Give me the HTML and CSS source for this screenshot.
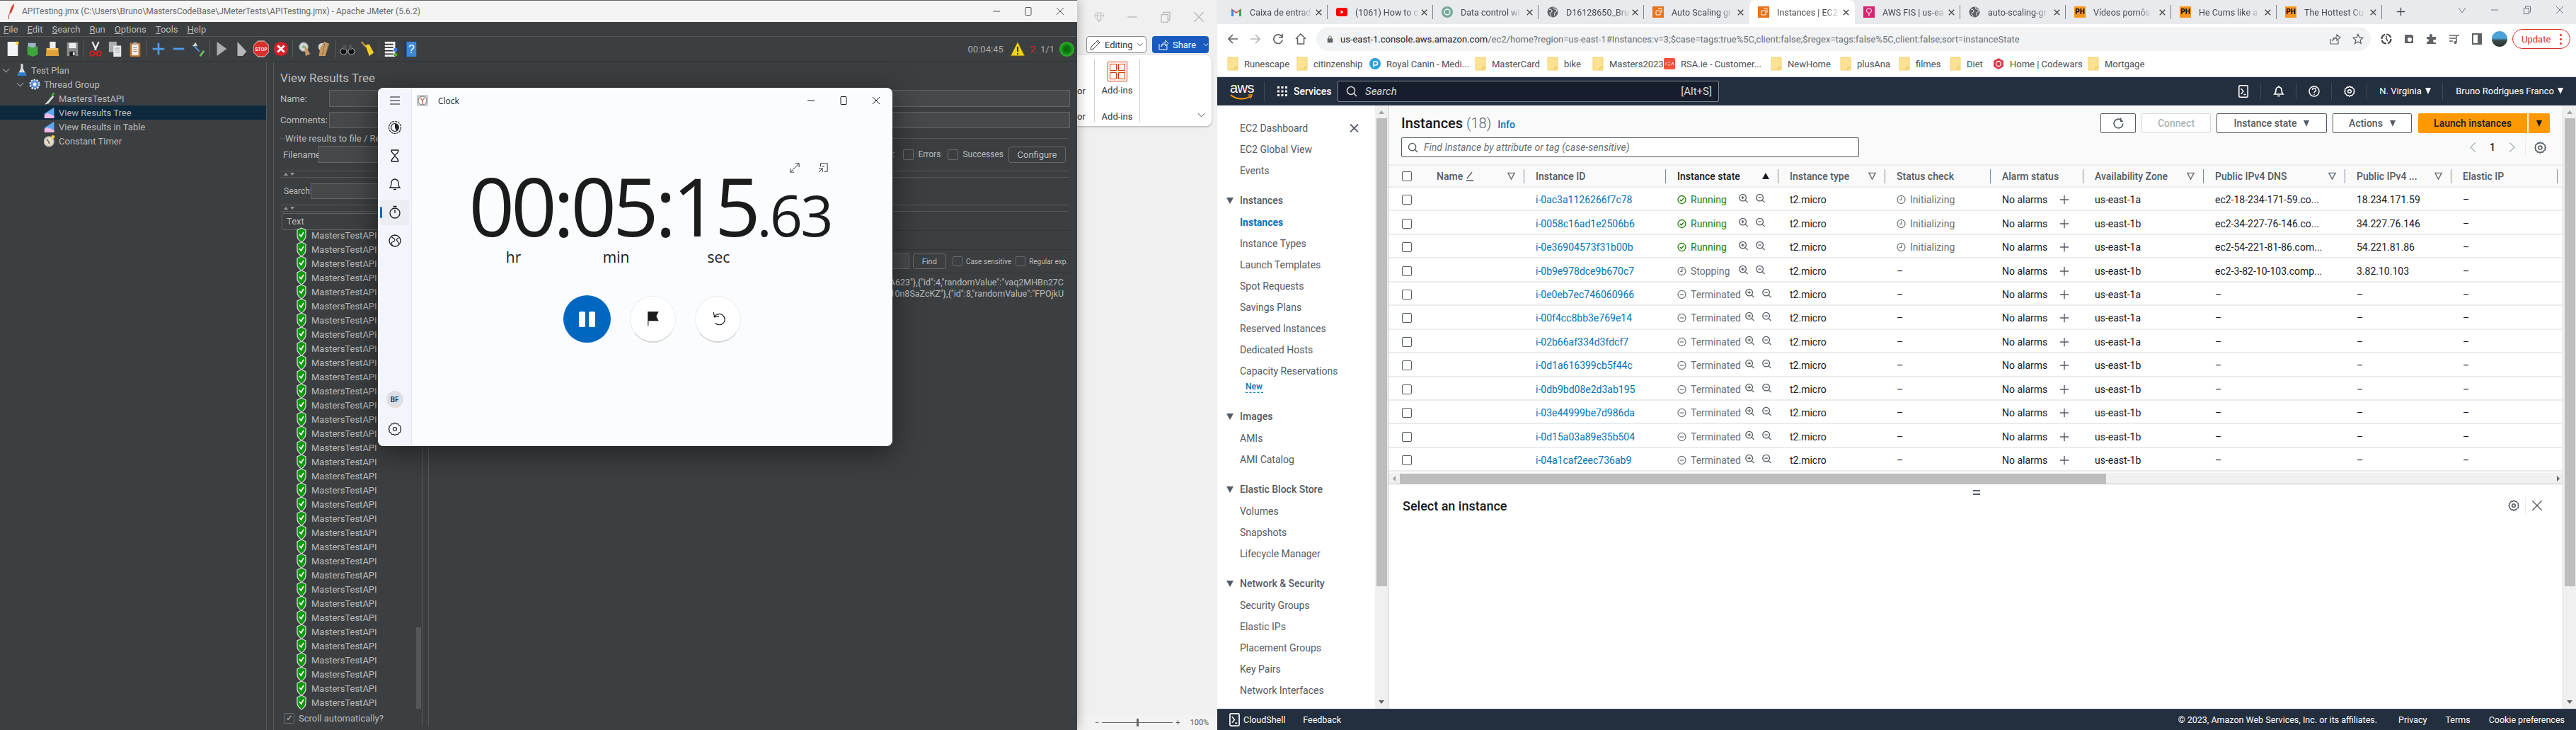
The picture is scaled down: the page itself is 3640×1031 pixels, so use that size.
FILE: index.html
```html
<!DOCTYPE html>
<html lang="en">
<head>
    <meta charset="UTF-8">
    <title>Desktop</title>
    <link rel="stylesheet" href="styles.css">
</head>
<body>
<svg class="defs">
    <symbol id="i-x" viewBox="0 0 12 12"><path d="M1 1l10 10M11 1L1 11" fill="none" stroke="currentColor" stroke-width="1"/></symbol>
    <symbol id="i-x2" viewBox="0 0 12 12"><path d="M1 1l10 10M11 1L1 11" fill="none" stroke="currentColor" stroke-width="1.800"/></symbol>
    <symbol id="i-min" viewBox="0 0 12 12"><path d="M1 6h10" stroke="currentColor" stroke-width="1"/></symbol>
    <symbol id="i-max" viewBox="0 0 12 12"><rect x="2" y=".5" width="8" height="11" rx="1" fill="none" stroke="currentColor"/></symbol>
    <symbol id="i-restore" viewBox="0 0 12 12"><path d="M1.500 3.500h7v8h-7zM3.500 3V1h7v8H9" fill="none" stroke="currentColor"/></symbol>
    <symbol id="i-folder" viewBox="0 0 16 20"><path d="M1 1h14v18H1z" fill="#fde293" stroke="#f2d06b"/><path d="M11 19v-4h4" fill="none" stroke="#e8bd4a"/></symbol>
    <symbol id="i-shield" viewBox="0 0 14 22"><path d="M7 1l6 3v8c0 4-3 7-6 9-3-2-6-5-6-9V4z" fill="#0a9a0a" stroke="#d5d5d5" stroke-width="1.300"/><path d="M4 10l2.500 3L10 7" fill="none" stroke="#fff" stroke-width="1.600"/></symbol>
    <symbol id="i-check" viewBox="0 0 16 16"><circle cx="8" cy="8" r="6.800" fill="none" stroke="currentColor" stroke-width="1.600"/><path d="M4.800 8l2.300 2.500L11.300 5.500" fill="none" stroke="currentColor" stroke-width="1.600"/></symbol>
    <symbol id="i-pending" viewBox="0 0 16 16"><circle cx="8" cy="8" r="6.800" fill="none" stroke="currentColor" stroke-width="1.500"/><path d="M8.500 3.500V8.500H5" fill="none" stroke="currentColor" stroke-width="1.500"/></symbol>
    <symbol id="i-stopped" viewBox="0 0 16 16"><circle cx="8" cy="8" r="6.800" fill="none" stroke="currentColor" stroke-width="1.500"/><path d="M4.500 8h7" stroke="currentColor" stroke-width="1.500"/></symbol>
    <symbol id="i-zin" viewBox="0 0 16 16"><circle cx="7" cy="7" r="5.500" fill="none" stroke="currentColor" stroke-width="1.500"/><path d="M4.500 7h5M7 4.500v5M11 11l4 4" fill="none" stroke="currentColor" stroke-width="1.500"/></symbol>
    <symbol id="i-zout" viewBox="0 0 16 16"><circle cx="7" cy="7" r="5.500" fill="none" stroke="currentColor" stroke-width="1.500"/><path d="M4.500 7h5M11 11l4 4" fill="none" stroke="currentColor" stroke-width="1.500"/></symbol>
    <symbol id="i-plus" viewBox="0 0 16 16"><path d="M8 1v14M1 8h14" stroke="currentColor" stroke-width="1.600"/></symbol>
    <symbol id="i-gear" viewBox="0 0 16 16"><path d="M8 1l1.600 1.200 2-.2 1 1.800 1.800 1-.2 2L15 8l-.8 1.200.2 2-1.800 1-1 1.800-2-.2L8 15l-1.600-1.200-2 .2-1-1.800-1.800-1 .2-2L1 8l.8-1.200-.2-2 1.800-1 1-1.800 2 .2z" fill="none" stroke="currentColor" stroke-width="1.500"/><circle cx="8" cy="8" r="2.300" fill="none" stroke="currentColor" stroke-width="1.500"/></symbol>
    <symbol id="i-filter" viewBox="0 0 12 12"><path d="M1 1.500h10L6 11z" fill="none" stroke="currentColor" stroke-width="1.600"/></symbol>
    <symbol id="i-shell" viewBox="0 0 14 18"><rect x=".8" y=".8" width="12.400" height="16.400" rx="1.500" fill="none" stroke="currentColor" stroke-width="1.600"/><path d="M3.500 5l3.500 4-3.500 4M7.500 13.500h3" fill="none" stroke="currentColor" stroke-width="1.400"/></symbol>
</svg>

<div class="desktop">

    <!-- JMeter -->
    <section class="jmeter">
        <header class="jm-title">
            <svg class="jm-feather" viewBox="0 0 10 24"><path d="M9 1C5 4 3 10 2 16l3-2C7 10 9 5 9 1z" fill="#d8402a"/><path d="M2 16l-1 7" stroke="#b5232b"/></svg>
            <span class="jm-title-text">APITesting.jmx (C:\Users\Bruno\MastersCodeBase\JMeterTests\APITesting.jmx) - Apache JMeter (5.6.2)</span>
            <div class="win-btns jm-btns">
                <svg><use href="#i-min"/></svg>
                <svg><use href="#i-max"/></svg>
                <svg><use href="#i-x"/></svg>
            </div>
        </header>
        <nav class="jm-menu">
            <span><u>F</u>ile</span><span><u>E</u>dit</span><span><u>S</u>earch</span><span><u>R</u>un</span><span><u>O</u>ptions</span><span><u>T</u>ools</span><span><u>H</u>elp</span>
        </nav>
        <div class="jm-tools">
            <svg class="tool" viewBox="0 0 24 24"><path d="M4 1h14l2 2v20H4z" fill="#f4f4f4"/><circle cx="19" cy="3" r="2.500" fill="#f5d33c"/></svg>
            <svg class="tool" viewBox="0 0 24 24"><path d="M5 3h12v8H5z" fill="#9fb6c8"/><path d="M4 8l8 2 8-2v13l-8 3-8-3z" fill="#3da63d"/></svg>
            <svg class="tool" viewBox="0 0 24 24"><path d="M8 1h9v10H8z" fill="#eee"/><path d="M3 11h18l1 12H2z" fill="#e0a23a"/><path d="M3 11h18v3H3z" fill="#f2c568"/></svg>
            <svg class="tool" viewBox="0 0 24 24"><path d="M4 2h17v21H4z" fill="#8a8d90"/><path d="M7 3h11v8H7z" fill="#eee"/><path d="M8 16h9v7H8z" fill="#222"/><path d="M13 17h3v5h-3z" fill="#ddd"/></svg>
            <i class="tool-sep"></i>
            <svg class="tool" viewBox="0 0 24 24"><path d="M7 1l6 13M17 1l-6 13" stroke="#e6e6e6" stroke-width="2.500"/><circle cx="7" cy="19" r="3.500" fill="none" stroke="#d42020" stroke-width="2.200"/><circle cx="17" cy="19" r="3.500" fill="none" stroke="#d42020" stroke-width="2.200"/></svg>
            <svg class="tool" viewBox="0 0 24 24"><path d="M2 1h12v16H2z" fill="#a9adb0"/><path d="M9 7h12v17H9z" fill="#e8e8e8"/><path d="M11 11h8M11 14h8M11 17h8" stroke="#999"/></svg>
            <svg class="tool" viewBox="0 0 24 24"><path d="M4 3h16v21H4z" fill="#c07a2c"/><path d="M7 5h10v17H7z" fill="#f0f0f0"/><path d="M9 2h6v4H9z" fill="#aaa"/><path d="M9 10h6M9 13h6M9 16h6" stroke="#777"/></svg>
            <i class="tool-sep"></i>
            <svg class="tool" viewBox="0 0 24 24"><path d="M12 3v18M3 12h18" stroke="#4e9be8" stroke-width="3"/></svg>
            <svg class="tool" viewBox="0 0 24 24"><path d="M4 12h17" stroke="#4e9be8" stroke-width="3"/></svg>
            <svg class="tool" viewBox="0 0 24 24"><path d="M3 8l5-6 3 6z" fill="#cfd4d8"/><path d="M6 8l8 8" stroke="#4e9be8" stroke-width="2"/><path d="M15 23l6-8" stroke="#6fbf60" stroke-width="3"/></svg>
            <i class="tool-sep"></i>
            <svg class="tool" viewBox="0 0 24 24"><path d="M5 1l15 11L5 23z" fill="#a9adb0"/></svg>
            <svg class="tool" viewBox="0 0 24 24"><path d="M6 1l14 15-6 7H6z" fill="#b5b9bc"/></svg>
            <svg class="tool" viewBox="0 0 24 24"><path d="M7 0h10l7 7v10l-7 7H7l-7-7V7z" fill="#d7302a" stroke="#eee"/><text x="12" y="15" class="stop-text">STOP</text></svg>
            <svg class="tool" viewBox="0 0 24 24"><circle cx="12" cy="12" r="11" fill="#d7202a"/><path d="M7 7l10 10M17 7L7 17" stroke="#fff" stroke-width="3.200"/></svg>
            <i class="tool-sep"></i>
            <svg class="tool" viewBox="0 0 24 24"><circle cx="11" cy="9" r="7" fill="#cfd4d8" stroke="#8a8d90"/><path d="M12 8l2 15 7-3-7-12z" fill="#c79a62"/><circle cx="11" cy="9" r="2" fill="#6fbf60"/></svg>
            <svg class="tool" viewBox="0 0 24 24"><circle cx="9" cy="9" r="6" fill="#cfd4d8"/><path d="M6 10l6-9 8 3-6 19H4z" fill="#c79a62"/><path d="M9 22l4-18M14 22l5-18" stroke="#8a6a3e"/></svg>
            <i class="tool-sep"></i>
            <svg class="tool" viewBox="0 0 24 24"><circle cx="6" cy="16" r="5" fill="#111" stroke="#ccc"/><circle cx="18" cy="16" r="5" fill="#111" stroke="#ccc"/><path d="M5 6h5v8H5zM14 6h5v8h-5z" fill="#555"/></svg>
            <svg class="tool" viewBox="0 0 24 24"><path d="M3 1l7 8" stroke="#c9973c" stroke-width="2.500"/><path d="M9 6l6-1 7 13-7 5z" fill="#f2cf2b"/></svg>
            <i class="tool-sep"></i>
            <svg class="tool" viewBox="0 0 24 24"><path d="M3 1h16v23H3z" fill="#f0f0f0"/><path d="M2 5h14M2 10h14M2 15h14M2 20h14" stroke="#222" stroke-width="1.600"/><path d="M17 11h5v5h-5z" fill="#3b7fd6"/><path d="M17 19h5v4h-5z" fill="#4aa84a"/></svg>
            <svg class="tool" viewBox="0 0 24 24"><path d="M2 1h4v23H2z" fill="#1f3a66"/><path d="M6 1h15v23H6z" fill="#3b87d8"/><text x="13.500" y="19" class="help-text">?</text></svg>
            <div class="jm-status">
                <span>00:04:45</span>
                <svg class="jm-warn" viewBox="0 0 22 22"><path d="M11 1l10 20H1z" fill="#f2d31b" stroke="#6b5a10"/><path d="M11 8v7M11 17v2" stroke="#222" stroke-width="2"/></svg>
                <span class="jm-red">2</span>
                <span>1/1</span>
                <i class="jm-ball"></i>
            </div>
        </div>

        <div class="jm-body">
            <aside class="jm-tree">
                <div class="tree-row lvl0"><b class="chev"></b><svg class="tree-ico" viewBox="0 0 20 24"><path d="M8 1h4v8l6 13H2L8 9z" fill="#d9dde0"/><path d="M5 16h10l3 6H2z" fill="#2c7fd1"/></svg>Test Plan</div>
                <div class="tree-row lvl1"><b class="chev"></b><svg class="tree-ico" viewBox="0 0 20 20"><circle cx="10" cy="10" r="8" fill="#5a8ed0" stroke="#d9dde0" stroke-width="3" stroke-dasharray="3 2"/><circle cx="10" cy="10" r="3" fill="#fff"/></svg>Thread Group</div>
                <div class="tree-row lvl2"><svg class="tree-ico" viewBox="0 0 20 24"><path d="M1 23l4-4 10-12 3 2L8 21z" fill="#d9dde0"/><path d="M13 6l4-5 2 3-3 5z" fill="#4aa84a"/></svg>MastersTestAPI</div>
                <div class="tree-row lvl2 selected"><svg class="tree-ico" viewBox="0 0 20 22"><path d="M1 21V13l12-8 5-3v19z" fill="#5ca8ee"/><path d="M1 21v-6l5-3 12 5v4z" fill="#f4b8e8"/></svg>View Results Tree</div>
                <div class="tree-row lvl2"><svg class="tree-ico" viewBox="0 0 20 22"><path d="M1 21V13l12-8 5-3v19z" fill="#5ca8ee"/><path d="M1 21v-6l5-3 12 5v4z" fill="#f4b8e8"/></svg>View Results in Table</div>
                <div class="tree-row lvl2"><svg class="tree-ico" viewBox="0 0 20 22"><circle cx="9" cy="12" r="8.500" fill="#e6dcc2" stroke="#b9bcbf" stroke-width="2"/><path d="M9 13L5 8M9 13v3" stroke="#444" stroke-width="1.500"/><circle cx="16" cy="4" r="3" fill="#f5d33c"/></svg>Constant Timer</div>
            </aside>
            <div class="jm-main">
                <h2 class="jm-heading">View Results Tree</h2>
                <div class="jm-field"><label>Name:</label><div class="jm-input"></div></div>
                <div class="jm-field jm-field-gap"><label>Comments:</label><div class="jm-input"></div></div>
                <div class="jm-legend"><span>Write results to file / Read from file</span></div>
                <div class="jm-file">
                    <label>Filename</label><div class="jm-input"></div>
                    <span class="jm-only">Log/Display Only:</span>
                    <i class="jm-box jm-box-errors"></i><span>Errors</span>
                    <i class="jm-box jm-box-success"></i><span>Successes</span>
                    <div class="jm-button jm-configure">Configure</div>
                </div>
                <div class="jm-split"><i></i><i></i></div>
                <div class="jm-search"><label>Search:</label><div class="jm-input"></div></div>
                <div class="jm-split"><i></i><i></i></div>
                <div class="jm-results">
                    <div class="jm-list">
                        <div class="jm-text-head">Text</div>
                        <ul class="jm-samples">
                            <li><svg><use href="#i-shield"/></svg>MastersTestAPI</li><li><svg><use href="#i-shield"/></svg>MastersTestAPI</li><li><svg><use href="#i-shield"/></svg>MastersTestAPI</li><li><svg><use href="#i-shield"/></svg>MastersTestAPI</li><li><svg><use href="#i-shield"/></svg>MastersTestAPI</li><li><svg><use href="#i-shield"/></svg>MastersTestAPI</li><li><svg><use href="#i-shield"/></svg>MastersTestAPI</li><li><svg><use href="#i-shield"/></svg>MastersTestAPI</li><li><svg><use href="#i-shield"/></svg>MastersTestAPI</li><li><svg><use href="#i-shield"/></svg>MastersTestAPI</li><li><svg><use href="#i-shield"/></svg>MastersTestAPI</li><li><svg><use href="#i-shield"/></svg>MastersTestAPI</li><li><svg><use href="#i-shield"/></svg>MastersTestAPI</li><li><svg><use href="#i-shield"/></svg>MastersTestAPI</li><li><svg><use href="#i-shield"/></svg>MastersTestAPI</li><li><svg><use href="#i-shield"/></svg>MastersTestAPI</li><li><svg><use href="#i-shield"/></svg>MastersTestAPI</li><li><svg><use href="#i-shield"/></svg>MastersTestAPI</li><li><svg><use href="#i-shield"/></svg>MastersTestAPI</li><li><svg><use href="#i-shield"/></svg>MastersTestAPI</li><li><svg><use href="#i-shield"/></svg>MastersTestAPI</li><li><svg><use href="#i-shield"/></svg>MastersTestAPI</li><li><svg><use href="#i-shield"/></svg>MastersTestAPI</li><li><svg><use href="#i-shield"/></svg>MastersTestAPI</li><li><svg><use href="#i-shield"/></svg>MastersTestAPI</li><li><svg><use href="#i-shield"/></svg>MastersTestAPI</li><li><svg><use href="#i-shield"/></svg>MastersTestAPI</li><li><svg><use href="#i-shield"/></svg>MastersTestAPI</li><li><svg><use href="#i-shield"/></svg>MastersTestAPI</li><li><svg><use href="#i-shield"/></svg>MastersTestAPI</li><li><svg><use href="#i-shield"/></svg>MastersTestAPI</li><li><svg><use href="#i-shield"/></svg>MastersTestAPI</li><li><svg><use href="#i-shield"/></svg>MastersTestAPI</li><li><svg><use href="#i-shield"/></svg>MastersTestAPI</li>
                        </ul>
                        <div class="jm-scroll-thumb"></div>
                        <div class="jm-auto"><i class="jm-box">&#10003;</i>Scroll automatically?</div>
                    </div>
                    <div class="jm-response">
                        <div class="jm-tabs"></div>
                        <div class="jm-find">
                            <div class="jm-input"></div>
                            <div class="jm-button">Find</div>
                            <i class="jm-box"></i><span>Case sensitive</span>
                            <i class="jm-box"></i><span>Regular exp.</span>
                        </div>
                        <div class="jm-body-text">
                            <p>A623"},{"id":4,"randomValue":"vaq2MHBn27C</p>
                            <p>10n8SaZcKZ"},{"id":8,"randomValue":"FPOjkU</p>
                        </div>
                    </div>
                </div>
            </div>
        </div>
    </section>

    <!-- Clock -->
    <section class="clock">
        <aside class="clock-nav">
            <svg viewBox="0 0 20 20" class="clock-ico"><path d="M3 5h14M3 10h14M3 15h14" stroke="currentColor" stroke-width="1.200"/></svg>
            <svg viewBox="0 0 20 20" class="clock-ico cn-first"><circle cx="10" cy="10" r="8.500" fill="none" stroke="currentColor" stroke-width="1.200" stroke-dasharray="3 1"/><circle cx="10" cy="10" r="5.500" fill="none" stroke="currentColor" stroke-width="1.200"/><path d="M10 5a5 5 0 0 1 2 9.500L10 10z" fill="currentColor"/></svg>
            <svg viewBox="0 0 20 20" class="clock-ico"><path d="M5 2h10M5 18h10M5 2c0 5 5 6 5 8s-5 3-5 8M15 2c0 5-5 6-5 8s5 3 5 8" fill="none" stroke="currentColor" stroke-width="1.300"/></svg>
            <svg viewBox="0 0 20 20" class="clock-ico"><path d="M3 15h14c-2-2-2-4-2-7a5 5 0 0 0-10 0c0 3 0 5-2 7zM8 17.500h4" fill="none" stroke="currentColor" stroke-width="1.300"/></svg>
            <div class="clock-nav-on"><svg viewBox="0 0 20 20" class="clock-ico"><circle cx="10" cy="11" r="7" fill="none" stroke="currentColor" stroke-width="1.300"/><path d="M7.500 1.500h5M10 6v5" fill="none" stroke="currentColor" stroke-width="1.300"/></svg></div>
            <svg viewBox="0 0 20 20" class="clock-ico"><circle cx="10" cy="10" r="8" fill="none" stroke="currentColor" stroke-width="1.300"/><path d="M5 4c2 3 5 2 5 5s-4 2-5 4 2 3 2 4M16 6c-3 0-4 2-3 4s3 2 2 5" fill="none" stroke="currentColor" stroke-width="1.200"/></svg>
            <div class="clock-avatar">BF</div>
            <svg viewBox="0 0 16 16" class="clock-ico clock-gear"><path d="M8 1l1.600 1.200 2-.2 1 1.800 1.800 1-.2 2L15 8l-.8 1.200.2 2-1.800 1-1 1.800-2-.2L8 15l-1.600-1.200-2 .2-1-1.800-1.800-1 .2-2L1 8l.8-1.200-.2-2 1.800-1 1-1.800 2 .2z" fill="none" stroke="currentColor" stroke-width=".9"/><circle cx="8" cy="8" r="2" fill="none" stroke="currentColor" stroke-width=".9"/></svg>
        </aside>
        <div class="clock-main">
            <header class="clock-title">
                <svg class="clock-logo" viewBox="0 0 16 16"><rect width="16" height="16" rx="2" fill="#c9cdd2"/><circle cx="8" cy="8" r="6" fill="#fff" stroke="#777"/><path d="M8 8L5 4M8 8l3-4M8 8v5" stroke="#c94a3a" stroke-width="1.200"/></svg>
                <span>Clock</span>
                <div class="win-btns clock-btns">
                    <svg><use href="#i-min"/></svg>
                    <svg><use href="#i-max"/></svg>
                    <svg><use href="#i-x"/></svg>
                </div>
            </header>
            <div class="clock-expand">
                <svg viewBox="0 0 16 16"><path d="M1 15L15 1M9 1h6v6M1 9v6h6" fill="none" stroke="currentColor"/></svg>
                <svg viewBox="0 0 16 16"><path d="M4 1h11v13h-5M4 1v5M1 9h6v6M1 15l6-6M10 6H7" fill="none" stroke="currentColor"/></svg>
            </div>
            <div class="clock-time">00:05:15<small>.63</small></div>
            <div class="clock-units"><span>hr</span><span>min</span><span>sec</span></div>
            <div class="clock-actions">
                <div class="clock-pause"><i></i><i></i></div>
                <div class="clock-round"><svg viewBox="0 0 20 20"><path d="M3 1h14l-3 6 3 6H4v6H3z" fill="#1b1b1b"/></svg></div>
                <div class="clock-round"><svg viewBox="0 0 20 20"><path d="M5 8a7 7 0 1 1 1 7.500M4 2l1 6 6-1" fill="none" stroke="#1b1b1b" stroke-width="1.100"/></svg></div>
            </div>
        </div>
    </section>

    <!-- Word, mostly behind the others -->
    <section class="word">
        <div class="word-top">
            <svg viewBox="0 0 16 16"><path d="M4 2h8l3 4-7 9-7-9zM1 6h14M6 2L5 6l3 9 3-9-1-4" fill="none" stroke="currentColor" stroke-width=".800"/></svg>
            <svg><use href="#i-min"/></svg>
            <svg><use href="#i-restore"/></svg>
            <svg><use href="#i-x"/></svg>
        </div>
        <div class="word-actions">
            <div class="word-edit">
                <svg viewBox="0 0 16 16"><path d="M1 15l1-4 9-9 3 3-9 9zM9.500 3.500l3 3" fill="none" stroke="#333" stroke-width=".900"/></svg>
                Editing<svg class="word-chev" viewBox="0 0 10 6"><path d="M1 1l4 4 4-4" fill="none" stroke="currentColor" stroke-width="1.200"/></svg>
            </div>
            <div class="word-share">
                <svg viewBox="0 0 16 16"><path d="M2 7v8h11V9M5 11c0-4 3-6 6-6V2l4 4-4 4V7c-3 0-5 1-6 4z" fill="none" stroke="#fff"/></svg>
                Share<svg class="word-chev" viewBox="0 0 10 6"><path d="M1 1l4 4 4-4" fill="none" stroke="currentColor" stroke-width="1.200"/></svg>
            </div>
        </div>
        <div class="word-ribbon">
            <div class="rib-editor">
                <span>or</span><span>or</span>
            </div>
            <div class="rib-addins">
                <svg viewBox="0 0 28 28"><path d="M.5.500h27v27H.5z" fill="none" stroke="#d13c10"/><path d="M3.500 3.500h9v9h-9zM15.500 3.500h9v9h-9zM3.500 15.500h9v9h-9zM15.500 15.500h9v9h-9z" fill="none" stroke="#d13c10"/></svg>
                <span>Add-ins</span>
                <span class="rib-group">Add-ins</span>
            </div>
            <svg class="rib-more" viewBox="0 0 12 8"><path d="M1 1l5 5 5-5" fill="none" stroke="#333"/></svg>
        </div>
        <div class="word-status">
            <span class="ws-sign">&minus;</span><div class="ws-slider"><i></i></div><span class="ws-sign">+</span>
            <span class="ws-zoom">100%</span>
        </div>
    </section>

    <!-- Chrome with the EC2 console -->
    <section class="chrome">
        <div class="tabs">
            <div class="tab"><svg class="fav" viewBox="0 0 16 16"><path d="M1 3v11h3V7l4 3 4-3v7h3V3l-7 5z" fill="#ea4335"/><path d="M1 3l3 4v7H1z" fill="#4285f4"/><path d="M15 3l-3 4v7h3z" fill="#34a853"/></svg><span class="tab-name">Caixa de entrad</span><svg class="tab-x"><use href="#i-x2"/></svg></div>
            <div class="tab"><svg class="fav" viewBox="0 0 16 16"><rect y="2" width="16" height="12" rx="3" fill="#f00"/><path d="M6.500 5.500l4 2.500-4 2.500z" fill="#fff"/></svg><span class="tab-name">(1061) How to c</span><svg class="tab-x"><use href="#i-x2"/></svg></div>
            <div class="tab"><svg class="fav" viewBox="0 0 16 16"><rect width="16" height="16" rx="8" fill="#74aa9c"/><circle cx="8" cy="8" r="4" fill="none" stroke="#fff" stroke-width="1.400"/></svg><span class="tab-name">Data control wi</span><svg class="tab-x"><use href="#i-x2"/></svg></div>
            <div class="tab"><svg class="fav" viewBox="0 0 16 16"><circle cx="8" cy="8" r="7.500" fill="#5f6368"/><path d="M3 4c3 0 4 1 4 3s-3 1-3 3 2 3 2 5M10 1c-1 2 0 3 1 3s3 0 3 2-2 1-3 3 0 4 0 4" fill="none" stroke="#fff"/></svg><span class="tab-name">D16128650_Bru</span><svg class="tab-x"><use href="#i-x2"/></svg></div>
            <div class="tab"><svg class="fav" viewBox="0 0 16 16"><rect width="16" height="16" fill="#e8731c"/><path d="M5 6h6v6H5zM8 3h5v6" fill="none" stroke="#fff"/></svg><span class="tab-name">Auto Scaling gr</span><svg class="tab-x"><use href="#i-x2"/></svg></div>
            <div class="tab tab-on"><svg class="fav" viewBox="0 0 16 16"><rect width="16" height="16" fill="#e8731c"/><path d="M5 6h6v6H5zM8 3h5v6" fill="none" stroke="#fff"/></svg><span class="tab-name">Instances | EC2</span><svg class="tab-x"><use href="#i-x2"/></svg></div>
            <div class="tab"><svg class="fav" viewBox="0 0 16 16"><rect width="16" height="16" fill="#d6246e"/><circle cx="8" cy="6" r="3.500" fill="none" stroke="#fff"/><path d="M8 9v5" stroke="#fff"/></svg><span class="tab-name">AWS FIS | us-ea</span><svg class="tab-x"><use href="#i-x2"/></svg></div>
            <div class="tab"><svg class="fav" viewBox="0 0 16 16"><circle cx="8" cy="8" r="7.500" fill="#5f6368"/><path d="M3 4c3 0 4 1 4 3s-3 1-3 3 2 3 2 5M10 1c-1 2 0 3 1 3s3 0 3 2-2 1-3 3 0 4 0 4" fill="none" stroke="#fff"/></svg><span class="tab-name">auto-scaling-gr</span><svg class="tab-x"><use href="#i-x2"/></svg></div>
            <div class="tab"><span class="fav fav-ph">PH</span><span class="tab-name">Vídeos pornôs</span><svg class="tab-x"><use href="#i-x2"/></svg></div>
            <div class="tab"><span class="fav fav-ph">PH</span><span class="tab-name">He Cums like a</span><svg class="tab-x"><use href="#i-x2"/></svg></div>
            <div class="tab"><span class="fav fav-ph">PH</span><span class="tab-name">The Hottest Cu</span><svg class="tab-x"><use href="#i-x2"/></svg></div>
            <svg class="tab-new"><use href="#i-plus"/></svg>
            <div class="win-btns chrome-btns">
                <svg viewBox="0 0 12 12"><path d="M1 3l5 7 5-7" fill="none" stroke="currentColor"/></svg>
                <svg><use href="#i-min"/></svg>
                <svg><use href="#i-restore"/></svg>
                <svg><use href="#i-x"/></svg>
            </div>
        </div>

        <div class="toolbar">
            <svg class="tb-ico" viewBox="0 0 16 16"><path d="M15 8H2M8 2L2 8l6 6" fill="none" stroke="#5f6368" stroke-width="1.700"/></svg>
            <svg class="tb-ico" viewBox="0 0 16 16"><path d="M1 8h13M8 2l6 6-6 6" fill="none" stroke="#b4b7bb" stroke-width="1.700"/></svg>
            <svg class="tb-ico" viewBox="0 0 16 16"><path d="M13.500 5A6.300 6.300 0 1 0 14.300 9M14 1v5H9" fill="none" stroke="#5f6368" stroke-width="1.700"/></svg>
            <svg class="tb-ico" viewBox="0 0 16 16"><path d="M1 8l7-7 7 7M3.500 7v8h9V7" fill="none" stroke="#5f6368" stroke-width="1.600"/></svg>
            <div class="omnibox">
                <svg class="lock" viewBox="0 0 12 14"><path d="M1 6h10v8H1z" fill="#5f6368"/><path d="M3.500 6V4a2.500 2.500 0 0 1 5 0v2" fill="none" stroke="#5f6368" stroke-width="1.300"/></svg>
                <span class="url"><b>us-east-1.console.aws.amazon.com</b>/ec2/home?region=us-east-1#Instances:v=3;$case=tags:true%5C,client:false;$regex=tags:false%5C,client:false;sort=instanceState</span>
                <svg class="omni-ico" viewBox="0 0 16 16"><path d="M1 8v7h11v-5M4 11c0-4 3-6 6-6V2l5 4-5 4V7c-3 0-5 1-6 4z" fill="none" stroke="#5f6368" stroke-width="1.200"/></svg>
                <svg class="omni-ico" viewBox="0 0 16 16"><path d="M8 1.500l2 4.500 4.800.5-3.600 3.200 1 4.800L8 12l-4.200 2.500 1-4.800L1.200 6.500 6 6z" fill="none" stroke="#5f6368" stroke-width="1.300"/></svg>
            </div>
            <div class="extensions">
                <svg viewBox="0 0 16 16"><circle cx="8" cy="8" r="6.500" fill="none" stroke="#444" stroke-width="2.200" stroke-dasharray="8 2"/><path d="M8 4v4l2 3" fill="none" stroke="#444" stroke-width="1.500"/></svg>
                <svg viewBox="0 0 16 16"><path d="M2 2h10l2 2v10H2z" fill="#5f6368"/><circle cx="9" cy="9" r="3" fill="#fff"/></svg>
                <svg viewBox="0 0 16 16"><path d="M1 5h4V3a2 2 0 0 1 4 0v2h5v4h-2a2 2 0 0 0 0 4h2v2H1v-3h1a2 2 0 0 0 0-4H1z" fill="#5f6368"/></svg>
                <svg viewBox="0 0 16 16"><path d="M1 3h9M1 7h9M1 11h5M11 13V3h4" fill="none" stroke="#5f6368" stroke-width="1.500"/><circle cx="9.500" cy="13" r="2" fill="#5f6368"/></svg>
                <svg viewBox="0 0 16 16"><path d="M2 1h12v14H2z" fill="none" stroke="#5f6368" stroke-width="2"/><path d="M9 1h5v14H9z" fill="#5f6368"/></svg>
                <div class="avatar"></div>
            </div>
            <div class="update">Update<span class="update-dots"><i></i><i></i><i></i></span></div>
        </div>

        <div class="bookmarks">
            <div class="bm"><svg><use href="#i-folder"/></svg>Runescape</div>
            <div class="bm"><svg><use href="#i-folder"/></svg>citinzenship</div>
            <div class="bm"><svg class="bm-round" viewBox="0 0 16 16"><circle cx="8" cy="8" r="8" fill="#2b9fe0"/><path d="M6 13V5h3a2 2 0 0 1 0 5H6" fill="none" stroke="#fff" stroke-width="1.500"/></svg>Royal Canin - Medi...</div>
            <div class="bm"><svg><use href="#i-folder"/></svg>MasterCard</div>
            <div class="bm"><svg><use href="#i-folder"/></svg>bike</div>
            <div class="bm"><svg><use href="#i-folder"/></svg>Masters2023</div>
            <div class="bm"><svg class="bm-round" viewBox="0 0 16 16"><rect width="16" height="16" rx="2" fill="#f0523a"/><path d="M3 10V6M6 6h3M6 10h3M11 10l1.500-4 1.500 4" fill="none" stroke="#fff" stroke-width=".900"/></svg>RSA.ie - Customer...</div>
            <div class="bm"><svg><use href="#i-folder"/></svg>NewHome</div>
            <div class="bm"><svg><use href="#i-folder"/></svg>plusAna</div>
            <div class="bm"><svg><use href="#i-folder"/></svg>filmes</div>
            <div class="bm"><svg><use href="#i-folder"/></svg>Diet</div>
            <div class="bm"><svg class="bm-round" viewBox="0 0 16 16"><path d="M8 0l7 4v8l-7 4-7-4V4z" fill="#e0384a"/><circle cx="8" cy="8" r="3.500" fill="none" stroke="#fff" stroke-width="1.300"/></svg>Home | Codewars</div>
            <div class="bm"><svg><use href="#i-folder"/></svg>Mortgage</div>
        </div>

        <header class="aws-bar">
            <div class="aws-logo">aws<svg viewBox="0 0 32 9"><path d="M1 1c8 7 20 7 28 2" fill="none" stroke="#ff9900" stroke-width="2"/><path d="M26 1h5l-2 5" fill="none" stroke="#ff9900" stroke-width="1.500"/></svg></div>
            <div class="aws-services">
                <svg viewBox="0 0 16 16"><path d="M1 1h3v3H1zM6.500 1h3v3h-3zM12 1h3v3h-3zM1 6.500h3v3H1zM6.500 6.500h3v3h-3zM12 6.500h3v3h-3zM1 12h3v3H1zM6.500 12h3v3h-3zM12 12h3v3h-3z" fill="#fff"/></svg>
                Services
            </div>
            <div class="aws-search">
                <svg viewBox="0 0 16 16"><circle cx="7" cy="7" r="5.500" fill="none" stroke="#d5dbdb" stroke-width="1.500"/><path d="M11 11l4 4" stroke="#d5dbdb" stroke-width="1.500"/></svg>
                <em>Search</em><span>[Alt+S]</span>
            </div>
            <div class="aws-right">
                <div class="aws-cell"><svg viewBox="0 0 14 18"><use href="#i-shell"/></svg></div>
                <div class="aws-cell"><svg viewBox="0 0 16 18"><path d="M2 13h12c-2-2-2-4-2-6a4 4 0 0 0-8 0c0 2 0 4-2 6zM6 15.500h4M8 1v2" fill="none" stroke="#fff" stroke-width="1.700"/></svg></div>
                <div class="aws-cell"><svg viewBox="0 0 16 16"><circle cx="8" cy="8" r="7" fill="none" stroke="#fff" stroke-width="1.500"/><path d="M5.500 6a2.500 2.500 0 1 1 3.500 2.300c-.7.400-1 1-1 1.700M8 11.500v1.500" fill="none" stroke="#fff" stroke-width="1.400"/></svg></div>
                <div class="aws-cell"><svg viewBox="0 0 16 16"><use href="#i-gear"/></svg></div>
                <div class="aws-menu aws-region">N. Virginia<i class="caret"></i></div>
                <div class="aws-menu aws-user">Bruno Rodrigues Franco<i class="caret"></i></div>
            </div>
        </header>

        <div class="console">
            <nav class="side">
                <svg class="side-x"><use href="#i-x2"/></svg>
                <a>EC2 Dashboard</a>
                <a>EC2 Global View</a>
                <a>Events</a>
                <h4>Instances</h4>
                <a class="on">Instances</a>
                <a>Instance Types</a>
                <a>Launch Templates</a>
                <a>Spot Requests</a>
                <a>Savings Plans</a>
                <a>Reserved Instances</a>
                <a>Dedicated Hosts</a>
                <a>Capacity Reservations</a>
                <span class="side-new">New</span>
                <h4>Images</h4>
                <a>AMIs</a>
                <a>AMI Catalog</a>
                <h4>Elastic Block Store</h4>
                <a>Volumes</a>
                <a>Snapshots</a>
                <a>Lifecycle Manager</a>
                <h4>Network &amp; Security</h4>
                <a>Security Groups</a>
                <a>Elastic IPs</a>
                <a>Placement Groups</a>
                <a>Key Pairs</a>
                <a>Network Interfaces</a>
            </nav>
            <div class="vscroll"><i class="arr-up"></i><i class="thumb"></i><i class="arr-down"></i></div>

            <main class="ec2">
                <div class="ec2-list">
                    <div class="ec2-top">
                        <h1>Instances <span>(18)</span> <a>Info</a></h1>
                        <div class="ec2-buttons">
                            <div class="btn btn-icon"><svg viewBox="0 0 16 16"><path d="M12.500 4A6 6 0 1 0 14 8M11 .5V5h3" fill="none" stroke="#545b64" stroke-width="1.500"/></svg></div>
                            <div class="btn btn-off">Connect</div>
                            <div class="btn btn-state">Instance state<i class="caret"></i></div>
                            <div class="btn btn-actions">Actions<i class="caret"></i></div>
                            <div class="launch"><div class="launch-main">Launch instances</div><div class="launch-drop"><i class="caret"></i></div></div>
                        </div>
                    </div>
                    <div class="ec2-filter">
                        <div class="filter-box"><svg viewBox="0 0 16 16"><circle cx="7" cy="7" r="5.500" fill="none" stroke="#545b64" stroke-width="1.500"/><path d="M11 11l4 4" stroke="#545b64" stroke-width="1.500"/></svg><em>Find Instance by attribute or tag (case-sensitive)</em></div>
                        <div class="pager">
                            <svg viewBox="0 0 8 14"><path d="M7 1L1 7l6 6" fill="none" stroke="#aab7b8" stroke-width="1.300"/></svg>
                            <b>1</b>
                            <svg viewBox="0 0 8 14"><path d="M1 1l6 6-6 6" fill="none" stroke="#aab7b8" stroke-width="1.300"/></svg>
                            <div class="pager-gear"><svg viewBox="0 0 16 16"><use href="#i-gear"/></svg></div>
                        </div>
                    </div>
                    <div class="row row-head">
                        <div class="cell-check"><i class="check"></i></div>
                        <div class="th th-name"><span>Name <svg class="pen" viewBox="0 0 12 14"><path d="M2 10l7-9M1 13h10" fill="none" stroke="#545b64" stroke-width="1.300"/></svg></span><svg class="flt"><use href="#i-filter"/></svg></div>
                        <div class="th">Instance ID</div>
                        <div class="th th-sorted">Instance state<i class="sort-up"></i></div>
                        <div class="th">Instance type<svg class="flt"><use href="#i-filter"/></svg></div>
                        <div class="th">Status check</div>
                        <div class="th">Alarm status</div>
                        <div class="th">Availability Zone<svg class="flt"><use href="#i-filter"/></svg></div>
                        <div class="th">Public IPv4 DNS<svg class="flt"><use href="#i-filter"/></svg></div>
                        <div class="th">Public IPv4 ...<svg class="flt"><use href="#i-filter"/></svg></div>
                        <div class="th th-last">Elastic IP</div>
                    </div>

                    <div class="row"><div class="cell-check"><i class="check"></i></div><div></div><div class="td link">i-0ac3a1126266f7c78</div><div class="td state ok"><svg class="st"><use href="#i-check"/></svg><span class="st-name">Running</span><svg class="zm"><use href="#i-zin"/></svg><svg class="zm"><use href="#i-zout"/></svg></div><div class="td">t2.micro</div><div class="td muted"><svg class="st"><use href="#i-pending"/></svg>Initializing</div><div class="td alarm">No alarms<svg class="add"><use href="#i-plus"/></svg></div><div class="td">us-east-1a</div><div class="td">ec2-18-234-171-59.co...</div><div class="td">18.234.171.59</div><div class="td">–</div></div>
                    <div class="row"><div class="cell-check"><i class="check"></i></div><div></div><div class="td link">i-0058c16ad1e2506b6</div><div class="td state ok"><svg class="st"><use href="#i-check"/></svg><span class="st-name">Running</span><svg class="zm"><use href="#i-zin"/></svg><svg class="zm"><use href="#i-zout"/></svg></div><div class="td">t2.micro</div><div class="td muted"><svg class="st"><use href="#i-pending"/></svg>Initializing</div><div class="td alarm">No alarms<svg class="add"><use href="#i-plus"/></svg></div><div class="td">us-east-1b</div><div class="td">ec2-34-227-76-146.co...</div><div class="td">34.227.76.146</div><div class="td">–</div></div>
                    <div class="row"><div class="cell-check"><i class="check"></i></div><div></div><div class="td link">i-0e36904573f31b00b</div><div class="td state ok"><svg class="st"><use href="#i-check"/></svg><span class="st-name">Running</span><svg class="zm"><use href="#i-zin"/></svg><svg class="zm"><use href="#i-zout"/></svg></div><div class="td">t2.micro</div><div class="td muted"><svg class="st"><use href="#i-pending"/></svg>Initializing</div><div class="td alarm">No alarms<svg class="add"><use href="#i-plus"/></svg></div><div class="td">us-east-1a</div><div class="td">ec2-54-221-81-86.com...</div><div class="td">54.221.81.86</div><div class="td">–</div></div>
                    <div class="row"><div class="cell-check"><i class="check"></i></div><div></div><div class="td link">i-0b9e978dce9b670c7</div><div class="td state muted"><svg class="st"><use href="#i-pending"/></svg><span class="st-name">Stopping</span><svg class="zm"><use href="#i-zin"/></svg><svg class="zm"><use href="#i-zout"/></svg></div><div class="td">t2.micro</div><div class="td">–</div><div class="td alarm">No alarms<svg class="add"><use href="#i-plus"/></svg></div><div class="td">us-east-1b</div><div class="td">ec2-3-82-10-103.comp...</div><div class="td">3.82.10.103</div><div class="td">–</div></div>
                    <div class="row"><div class="cell-check"><i class="check"></i></div><div></div><div class="td link">i-0e0eb7ec746060966</div><div class="td state muted term"><svg class="st"><use href="#i-stopped"/></svg><span class="st-name">Terminated</span><svg class="zm"><use href="#i-zin"/></svg><svg class="zm"><use href="#i-zout"/></svg></div><div class="td">t2.micro</div><div class="td">–</div><div class="td alarm">No alarms<svg class="add"><use href="#i-plus"/></svg></div><div class="td">us-east-1a</div><div class="td">–</div><div class="td">–</div><div class="td">–</div></div>
                    <div class="row"><div class="cell-check"><i class="check"></i></div><div></div><div class="td link">i-00f4cc8bb3e769e14</div><div class="td state muted term"><svg class="st"><use href="#i-stopped"/></svg><span class="st-name">Terminated</span><svg class="zm"><use href="#i-zin"/></svg><svg class="zm"><use href="#i-zout"/></svg></div><div class="td">t2.micro</div><div class="td">–</div><div class="td alarm">No alarms<svg class="add"><use href="#i-plus"/></svg></div><div class="td">us-east-1a</div><div class="td">–</div><div class="td">–</div><div class="td">–</div></div>
                    <div class="row"><div class="cell-check"><i class="check"></i></div><div></div><div class="td link">i-02b66af334d3fdcf7</div><div class="td state muted term"><svg class="st"><use href="#i-stopped"/></svg><span class="st-name">Terminated</span><svg class="zm"><use href="#i-zin"/></svg><svg class="zm"><use href="#i-zout"/></svg></div><div class="td">t2.micro</div><div class="td">–</div><div class="td alarm">No alarms<svg class="add"><use href="#i-plus"/></svg></div><div class="td">us-east-1a</div><div class="td">–</div><div class="td">–</div><div class="td">–</div></div>
                    <div class="row"><div class="cell-check"><i class="check"></i></div><div></div><div class="td link">i-0d1a616399cb5f44c</div><div class="td state muted term"><svg class="st"><use href="#i-stopped"/></svg><span class="st-name">Terminated</span><svg class="zm"><use href="#i-zin"/></svg><svg class="zm"><use href="#i-zout"/></svg></div><div class="td">t2.micro</div><div class="td">–</div><div class="td alarm">No alarms<svg class="add"><use href="#i-plus"/></svg></div><div class="td">us-east-1b</div><div class="td">–</div><div class="td">–</div><div class="td">–</div></div>
                    <div class="row"><div class="cell-check"><i class="check"></i></div><div></div><div class="td link">i-0db9bd08e2d3ab195</div><div class="td state muted term"><svg class="st"><use href="#i-stopped"/></svg><span class="st-name">Terminated</span><svg class="zm"><use href="#i-zin"/></svg><svg class="zm"><use href="#i-zout"/></svg></div><div class="td">t2.micro</div><div class="td">–</div><div class="td alarm">No alarms<svg class="add"><use href="#i-plus"/></svg></div><div class="td">us-east-1b</div><div class="td">–</div><div class="td">–</div><div class="td">–</div></div>
                    <div class="row"><div class="cell-check"><i class="check"></i></div><div></div><div class="td link">i-03e44999be7d986da</div><div class="td state muted term"><svg class="st"><use href="#i-stopped"/></svg><span class="st-name">Terminated</span><svg class="zm"><use href="#i-zin"/></svg><svg class="zm"><use href="#i-zout"/></svg></div><div class="td">t2.micro</div><div class="td">–</div><div class="td alarm">No alarms<svg class="add"><use href="#i-plus"/></svg></div><div class="td">us-east-1b</div><div class="td">–</div><div class="td">–</div><div class="td">–</div></div>
                    <div class="row"><div class="cell-check"><i class="check"></i></div><div></div><div class="td link">i-0d15a03a89e35b504</div><div class="td state muted term"><svg class="st"><use href="#i-stopped"/></svg><span class="st-name">Terminated</span><svg class="zm"><use href="#i-zin"/></svg><svg class="zm"><use href="#i-zout"/></svg></div><div class="td">t2.micro</div><div class="td">–</div><div class="td alarm">No alarms<svg class="add"><use href="#i-plus"/></svg></div><div class="td">us-east-1b</div><div class="td">–</div><div class="td">–</div><div class="td">–</div></div>
                    <div class="row"><div class="cell-check"><i class="check"></i></div><div></div><div class="td link">i-04a1caf2eec736ab9</div><div class="td state muted term"><svg class="st"><use href="#i-stopped"/></svg><span class="st-name">Terminated</span><svg class="zm"><use href="#i-zin"/></svg><svg class="zm"><use href="#i-zout"/></svg></div><div class="td">t2.micro</div><div class="td">–</div><div class="td alarm">No alarms<svg class="add"><use href="#i-plus"/></svg></div><div class="td">us-east-1b</div><div class="td">–</div><div class="td">–</div><div class="td">–</div></div>

                    <div class="hscroll"><i class="arr-left"></i><i class="hthumb"></i><i class="arr-right"></i></div>
                </div>
                <div class="ec2-detail">
                    <div class="detail-grip"></div>
                    <div class="detail-head">
                        <h3>Select an instance</h3>
                        <div class="detail-icons">
                            <svg viewBox="0 0 16 16"><use href="#i-gear"/></svg>
                            <i></i>
                            <svg viewBox="0 0 12 12"><use href="#i-x"/></svg>
                        </div>
                    </div>
                </div>
            </main>
            <div class="vscroll vscroll-r"><i class="arr-up"></i><i class="thumb"></i><i class="arr-down"></i></div>
        </div>

        <footer class="aws-foot">
            <svg viewBox="0 0 14 18"><use href="#i-shell"/></svg>
            <span class="foot-shell">CloudShell</span>
            <span class="foot-feedback">Feedback</span>
            <div class="foot-right">
                <span class="foot-copy">© 2023, Amazon Web Services, Inc. or its affiliates.</span>
                <span>Privacy</span><span>Terms</span><span>Cookie preferences</span>
            </div>
        </footer>
    </section>
</div>
</body>
</html>
```

FILE: styles.css
```css
/* Basic Reset */
body, h1, h2, h3, h4, p, ul {
    margin: 0;
    padding: 0;
}

body {
    background: #f0f0f0;
    overflow: hidden;
    font-family: Roboto, "Noto Sans", sans-serif;
}

.defs {
    display: none;
}

.desktop {
    position: relative;
    width: 3640px;
    height: 1031px;
    overflow: hidden;
}

i {
    font-style: normal;
}

/* Window buttons */
.win-btns {
    display: flex;
    margin-left: auto;
}

.win-btns svg {
    width: 12px;
    height: 12px;
}

/* JMeter window */
.jmeter {
    position: absolute;
    left: 0;
    top: 0;
    width: 1522px;
    height: 1031px;
    display: flex;
    flex-direction: column;
    background: #3c3f41;
    color: #bbb;
    font-size: 13px;
    box-shadow: 2px 0 14px rgba(0, 0, 0, 0.25);
    z-index: 3;
}

.jm-title {
    height: 30px;
    border-top: 1px solid #666;
    display: flex;
    align-items: center;
    flex: none;
    background: #f4f4f4;
    color: #666;
}

.jm-feather {
    width: 10px;
    height: 24px;
    margin-left: 11px;
}

.jm-title-text {
    margin-left: 10px;
    font-size: 12px;
    white-space: nowrap;
}

.jm-btns {
    gap: 33px;
    padding-right: 18px;
    color: #555;
}

.jm-menu {
    height: 20px;
    flex: none;
    display: flex;
    align-items: center;
    gap: 13px;
    padding-left: 5px;
    border-bottom: 1px solid #55585a;
    color: #bbb;
    font-size: 13px;
}

.jm-tools {
    height: 34px;
    flex: none;
    display: flex;
    align-items: center;
    padding-left: 4px;
    border-bottom: 1px solid #323537;
}

.tool {
    width: 22px;
    height: 24px;
    padding: 0 3px;
    flex: none;
}

.tool-sep {
    width: 1px;
    height: 24px;
    margin: 0 2px;
    background: #55585a;
}

.stop-text {
    fill: #fff;
    font-size: 7px;
    font-weight: 700;
    text-anchor: middle;
    font-family: "Liberation Sans", sans-serif;
}

.help-text {
    fill: #fff;
    font-size: 17px;
    text-anchor: middle;
    font-family: "Liberation Sans", sans-serif;
}

.jm-status {
    margin-left: auto;
    padding-right: 4px;
    display: flex;
    align-items: center;
    gap: 7px;
    color: #aaa;
}

.jm-warn {
    width: 22px;
    height: 22px;
    margin-left: 2px;
}

.jm-red {
    color: #e02020;
}

.jm-ball {
    width: 21px;
    height: 21px;
    border-radius: 50%;
    background: radial-gradient(circle, #0c6d0c 25%, #22a722 60%, #48c836);
}

.jm-body {
    flex: 1;
    display: flex;
    min-height: 0;
}

.jm-tree {
    width: 377px;
    flex: none;
    padding-top: 2px;
    border-right: 1px solid #55585a;
    box-sizing: border-box;
}

.tree-row {
    height: 20px;
    display: flex;
    align-items: center;
    position: relative;
    white-space: nowrap;
}

.tree-row.selected {
    background: #0d293e;
}

.lvl0 {
    padding-left: 23px;
}

.lvl1 {
    padding-left: 41px;
}

.lvl2 {
    padding-left: 62px;
}

.tree-ico {
    width: 16px;
    height: 20px;
    margin-right: 5px;
    flex: none;
}

.chev {
    position: absolute;
    top: 5px;
    width: 6px;
    height: 6px;
    border-right: 1.500px solid #9a9d9f;
    border-bottom: 1.500px solid #9a9d9f;
    transform: rotate(45deg);
}

.lvl0 .chev {
    left: 5px;
}

.lvl1 .chev {
    left: 25px;
}

.jm-main {
    flex: 1;
    min-width: 0;
    margin-left: 9px;
    padding-left: 9px;
    border-left: 1px solid #55585a;
    display: flex;
    flex-direction: column;
}

.jm-heading {
    height: 22px;
    margin-top: 12px;
    font-size: 17px;
    font-weight: 400;
    line-height: 22px;
    color: #bbb;
}

.jm-field {
    display: flex;
    align-items: center;
    margin-top: 6px;
    height: 24px;
    padding-right: 10px;
}

.jm-field-gap {
    margin-top: 7px;
    height: 23px;
}

.jm-field label {
    width: 69px;
    flex: none;
}

.jm-input {
    flex: 1;
    height: 100%;
    box-sizing: border-box;
    background: #45494a;
    border: 1px solid #646464;
}

.jm-legend {
    margin: 8px 12px 0 0;
    height: 14px;
    line-height: 14px;
    padding-left: 7px;
    background: linear-gradient(#3c3f41 6px, #55585a 6px, #55585a 7px, #3c3f41 7px);
    white-space: nowrap;
}

.jm-legend span {
    background: #3c3f41;
}

.jm-file {
    display: flex;
    align-items: center;
    height: 24px;
    padding: 0 16px 0 4px;
    margin-top: 3px;
    font-size: 12px;
}

.jm-file label {
    width: 50px;
    flex: none;
    font-size: 13px;
}

.jm-only {
    margin-left: 6px;
    white-space: nowrap;
}

.jm-box {
    width: 13px;
    height: 13px;
    border: 1px solid #6b6b6b;
    border-radius: 2px;
    flex: none;
    color: #bbb;
    font-size: 12px;
    line-height: 13px;
    text-align: center;
}

.jm-box-errors {
    margin: 0 6px 0 12px;
}

.jm-box-success {
    margin: 0 6px 0 10px;
}

.jm-button {
    border: 1px solid #666;
    border-radius: 3px;
    height: 23px;
    box-sizing: border-box;
    line-height: 21px;
    text-align: center;
}

.jm-configure {
    width: 81px;
    margin-left: 7px;
    font-size: 13px;
}

.jm-split {
    margin: 11px 12px 0 0;
    height: 8px;
    border-top: 1px solid #55585a;
    border-bottom: 1px solid #55585a;
    display: flex;
    align-items: center;
    gap: 3px;
    padding-left: 5px;
}

.jm-search + .jm-split {
    margin-top: 8px;
}

.jm-split i {
    width: 0;
    height: 0;
    border-left: 3px solid transparent;
    border-right: 3px solid transparent;
    border-bottom: 4px solid #999;
}

.jm-split i + i {
    border-bottom: 0;
    border-top: 4px solid #999;
}

.jm-search {
    display: flex;
    align-items: center;
    height: 22px;
    margin-top: 8px;
    padding-left: 5px;
    font-size: 12px;
}

.jm-search label {
    width: 38px;
    flex: none;
}

.jm-search .jm-input {
    flex: none;
    width: 700px;
}

.jm-results {
    flex: 1;
    display: flex;
    min-height: 0;
    margin-top: 2px;
    margin-bottom: 5px;
}

.jm-list {
    width: 199px;
    flex: none;
    margin-left: 2px;
    position: relative;
    border-right: 1px solid #55585a;
    box-sizing: border-box;
    display: flex;
    flex-direction: column;
}

.jm-text-head {
    height: 24px;
    box-sizing: border-box;
    line-height: 22px;
    padding-left: 6px;
    border: 1px solid #646464;
    border-radius: 3px 0 0 3px;
    flex: none;
}

.jm-samples {
    list-style: none;
    margin-top: -3px;
}

.jm-samples li {
    height: 20px;
    display: flex;
    align-items: center;
    padding-left: 21px;
    white-space: nowrap;
}

.jm-samples svg {
    width: 14px;
    height: 22px;
    margin-right: 7px;
}

.jm-scroll-thumb {
    position: absolute;
    right: 1px;
    top: 585px;
    width: 7px;
    height: 115px;
    background: #55585a;
}

.jm-auto {
    display: flex;
    align-items: center;
    gap: 6px;
    height: 22px;
    margin-top: 1px;
}

.jm-auto .jm-box {
    margin-left: 3px;
}

.jm-response {
    flex: 1;
    min-width: 0;
    margin-left: 8px;
    border-left: 1px solid #55585a;
    margin-right: 10px;
}

.jm-tabs {
    height: 26px;
    margin-top: 24px;
    border-top: 1px solid #323537;
    border-bottom: 1px solid #323537;
}

.jm-find {
    display: flex;
    align-items: center;
    justify-content: flex-end;
    height: 32px;
    border-bottom: 1px solid #323537;
    font-size: 10px;
    white-space: nowrap;
    gap: 5px;
    padding-right: 3px;
}

.jm-find .jm-input {
    height: 22px;
}

.jm-find .jm-button {
    width: 47px;
    height: 22px;
    font-size: 11px;
    margin-right: 3px;
}

.jm-find .jm-box {
    width: 14px;
    height: 14px;
    box-sizing: border-box;
    margin-left: 1px;
}

.jm-body-text {
    padding: 5px 9px 0 0;
    text-align: right;
    font-size: 12.5px;
    line-height: 16px;
    white-space: nowrap;
}

/* Clock window */
.clock {
    position: absolute;
    left: 534px;
    top: 124px;
    width: 727px;
    height: 506px;
    display: flex;
    border-radius: 8px;
    overflow: hidden;
    background: #fafcff;
    color: #1b1b1b;
    box-shadow: 0 8px 40px rgba(0, 0, 0, 0.5);
    z-index: 5;
    font-family: "Open Sans", "Noto Sans", sans-serif;
}

.clock-nav {
    width: 48px;
    flex: none;
    background: #f2f5fc;
    border-right: 1px solid #e6e9f0;
    box-sizing: border-box;
    display: flex;
    flex-direction: column;
    align-items: center;
    padding-top: 8px;
}

.clock-ico {
    width: 20px;
    height: 20px;
    flex: none;
    margin-bottom: 20px;
    color: #1b1b1b;
}

.cn-first {
    margin-top: -2px;
}

.clock-nav-on {
    width: 41px;
    height: 36px;
    margin: -8px 0 12px;
    background: #eaedf2;
    border-radius: 4px;
    display: flex;
    align-items: center;
    justify-content: center;
    position: relative;
}

.clock-nav-on::before {
    content: "";
    position: absolute;
    left: 0;
    top: 10px;
    width: 3px;
    height: 16px;
    border-radius: 2px;
    background: #0067c0;
}

.clock-nav-on .clock-ico {
    margin: 0;
}

.clock-avatar {
    width: 24px;
    height: 24px;
    margin: auto 0 20px;
    border-radius: 50%;
    background: #dcdfe5;
    font-size: 10px;
    line-height: 24px;
    text-align: center;
    font-weight: 600;
}

.clock-gear {
    margin-bottom: 14px;
}

.clock-main {
    flex: 1;
    display: flex;
    flex-direction: column;
}

.clock-title {
    height: 36px;
    display: flex;
    align-items: center;
    flex: none;
    font-size: 12px;
}

.clock-logo {
    width: 16px;
    height: 16px;
    margin-left: 7px;
    margin-right: 14px;
}

.clock-btns {
    gap: 34px;
    padding-right: 17px;
}

.clock-expand {
    display: flex;
    justify-content: flex-end;
    gap: 26px;
    padding-right: 91px;
    margin-top: 67px;
    height: 20px;
}

.clock-expand svg {
    width: 14px;
    height: 20px;
}

.clock-time {
    text-align: center;
    font-size: 113px;
    line-height: 81px;
    letter-spacing: -5px;
    white-space: nowrap;
    margin-top: 3px;
    padding-right: 6px;
    color: #1b1b1b;
}

.clock-time small {
    font-size: 81px;
    line-height: 0;
    letter-spacing: -3px;
}

.clock-units {
    display: flex;
    justify-content: center;
    font-size: 21px;
    line-height: 26px;
    margin-top: 19px;
    padding-right: 102px;
}

.clock-units span {
    width: 145px;
    text-align: center;
}

.clock-actions {
    display: flex;
    justify-content: center;
    align-items: center;
    gap: 27px;
    margin-top: 41px;
}

.clock-pause {
    width: 67px;
    height: 67px;
    border-radius: 50%;
    background: #0067c0;
    display: flex;
    align-items: center;
    justify-content: center;
    gap: 5px;
}

.clock-pause i {
    width: 9px;
    height: 22px;
    border-radius: 2px;
    background: #fff;
}

.clock-round {
    width: 63px;
    height: 63px;
    border-radius: 50%;
    background: #fff;
    border: 1px solid #ececec;
    border-bottom: 2px solid #d5d5d5;
    display: flex;
    align-items: center;
    justify-content: center;
}

.clock-round svg {
    width: 22px;
    height: 24px;
}

/* Word behind */
.word {
    position: absolute;
    left: 1522px;
    top: 0;
    width: 198px;
    height: 1031px;
    background: #f0f0f0;
    display: flex;
    flex-direction: column;
}

.word-top {
    height: 48px;
    display: flex;
    align-items: center;
    color: #b9b9b9;
    padding: 0 18px 0 23px;
    justify-content: space-between;
    flex: none;
}

.word-top svg {
    width: 16px;
    height: 16px;
}

.word-actions {
    display: flex;
    gap: 8px;
    height: 24px;
    margin-top: 3px;
    padding-left: 13px;
    font-size: 13px;
    flex: none;
}

.word-edit, .word-share {
    display: flex;
    align-items: center;
    border-radius: 4px;
    gap: 5px;
    box-sizing: border-box;
}

.word-edit {
    width: 85px;
    padding-left: 4px;
    background: #fff;
    border: 1px solid #8a8a8a;
    color: #333;
}

.word-share {
    width: 80px;
    padding-left: 8px;
    background: #185abd;
    color: #fff;
}

.word-edit > svg:first-child, .word-share > svg:first-child {
    width: 16px;
    height: 16px;
}

.word-chev {
    width: 8px;
    height: 6px;
    margin-left: 1px;
}

.word-share .word-chev {
    margin-left: 5px;
}

.word-ribbon {
    height: 100px;
    width: 190px;
    margin-top: 3px;
    flex: none;
    background: #fff;
    border-radius: 0 8px 8px 0;
    box-shadow: 0 1px 3px rgba(0, 0, 0, 0.3);
    display: flex;
    padding: 5px 0 6px;
    box-sizing: border-box;
    font-size: 13px;
    color: #333;
    position: relative;
}

.rib-editor {
    width: 24px;
    flex: none;
    border-right: 1px solid #d0d0d0;
    display: flex;
    flex-direction: column;
    justify-content: space-between;
    padding: 38px 0 0;
}

.rib-addins {
    width: 63px;
    flex: none;
    border-right: 1px solid #d0d0d0;
    display: flex;
    flex-direction: column;
    align-items: center;
}

.rib-addins svg {
    width: 28px;
    height: 28px;
    margin: 4px 0 5px;
}

.rib-group {
    margin-top: auto;
}

.rib-more {
    position: absolute;
    right: 9px;
    bottom: 11px;
    width: 11px;
    height: 8px;
}

.word-status {
    margin-top: auto;
    height: 21px;
    display: flex;
    align-items: center;
    background: #f3f3f3;
    flex: none;
    font-size: 11px;
    color: #555;
    padding-left: 25px;
    gap: 4px;
}

.ws-slider {
    width: 100px;
    height: 1px;
    background: #666;
    position: relative;
}

.ws-slider i {
    position: absolute;
    left: 49px;
    top: -5px;
    width: 3px;
    height: 11px;
    background: #666;
}

.ws-zoom {
    margin-left: 10px;
}

/* Chrome */
.chrome {
    position: absolute;
    left: 1720px;
    top: 0;
    width: 1920px;
    height: 1031px;
    display: flex;
    flex-direction: column;
    background: #fff;
    color: #3c4043;
}

.tabs {
    height: 34px;
    flex: none;
    display: flex;
    padding-left: 7px;
    background: #e8eaed;
}

.tab {
    width: 149px;
    height: 34px;
    flex: none;
    display: flex;
    align-items: center;
    padding: 0 6px 0 12px;
    box-sizing: border-box;
    position: relative;
    font-size: 12.5px;
    color: #45494e;
}

.tab::after {
    content: "";
    position: absolute;
    right: 0;
    top: 7px;
    width: 1px;
    height: 20px;
    background: #7f8489;
}

.tab:has(+ .tab-on)::after, .tab-on::after {
    display: none;
}

.tab-on {
    background: #fff;
    border-radius: 8px 8px 0 0;
}

.fav {
    width: 16px;
    height: 16px;
    flex: none;
}

.fav-ph {
    background: #f7971d;
    color: #000;
    font-size: 10px;
    font-weight: 700;
    line-height: 16px;
    text-align: center;
}

.tab-name {
    margin-left: 11px;
    white-space: nowrap;
    -webkit-mask-image: linear-gradient(to right, #000 80%, rgba(0, 0, 0, 0.15));
    mask-image: linear-gradient(to right, #000 80%, rgba(0, 0, 0, 0.15));
}

.tab-x {
    width: 9px;
    height: 9px;
    margin-left: auto;
    margin-right: 2px;
    color: #444;
}

.tab-new {
    width: 13px;
    height: 13px;
    margin: 10px 0 0 20px;
    color: #45494e;
}

.chrome-btns {
    gap: 34px;
    padding: 8px 17px 0 0;
    color: #70757a;
}

.toolbar {
    height: 34px;
    flex: none;
    display: flex;
    align-items: center;
    padding-left: 14px;
    padding-top: 4px;
}

.tb-ico {
    width: 16px;
    height: 16px;
    margin-right: 16px;
    flex: none;
}

.omnibox {
    width: 1490px;
    flex: none;
    box-sizing: border-box;
    height: 34px;
    margin-left: -2px;
    border-radius: 17px;
    background: #f1f3f4;
    display: flex;
    align-items: center;
    padding: 0 10px 0 15px;
    font-size: 13px;
    color: #6c7074;
}

.lock {
    width: 9px;
    height: 12px;
    margin-right: 10px;
    flex: none;
}

.url {
    white-space: nowrap;
    overflow: hidden;
    flex: 1;
}

.url b {
    font-weight: 400;
    color: #202124;
}

.omni-ico {
    width: 16px;
    height: 16px;
    margin-left: 16px;
    flex: none;
}

.extensions {
    display: flex;
    align-items: center;
    gap: 16px;
    padding-left: 14px;
    flex: none;
}

.extensions svg {
    width: 16px;
    height: 16px;
}

.avatar {
    width: 22px;
    height: 22px;
    margin-left: -3px;
    border-radius: 50%;
    background: linear-gradient(#4aa3d8 45%, #3a4a4a 60%, #2a2f30);
}

.update {
    width: 82px;
    height: 28px;
    flex: none;
    margin-left: auto;
    margin-right: 8px;
    box-sizing: border-box;
    border: 1px solid #d93025;
    border-radius: 14px;
    color: #d93025;
    font-size: 13px;
    display: flex;
    align-items: center;
    padding-left: 12px;
}

.update-dots {
    display: flex;
    flex-direction: column;
    gap: 3px;
    margin-left: 13px;
}

.update-dots i {
    width: 3px;
    height: 3px;
    border-radius: 50%;
    background: #d93025;
}

.bookmarks {
    height: 36px;
    flex: none;
    display: grid;
    grid-template-columns: 98px 103px 149px 102px 64px 101px 151px 98px 83px 72px 61px 134px auto;
    align-items: center;
    padding-left: 14px;
    box-sizing: border-box;
    font-size: 13px;
    color: #4a4e52;
}

.bm {
    display: flex;
    align-items: center;
    gap: 8px;
    white-space: nowrap;
}

.bm svg {
    width: 16px;
    height: 20px;
    flex: none;
}

.bm svg.bm-round {
    height: 16px;
}

.aws-bar {
    height: 41px;
    flex: none;
    display: flex;
    align-items: center;
    background: #232f3e;
    border-top: 1px solid #cfd3d6;
    border-bottom: 1px solid #3a4656;
    box-sizing: border-box;
    color: #fff;
    font-size: 14px;
}

.aws-logo {
    width: 67px;
    height: 28px;
    box-sizing: border-box;
    flex: none;
    padding-left: 18px;
    border-right: 1px solid #414750;
    font: 400 20px/18px "Liberation Sans", sans-serif;
    letter-spacing: -.5px;
}

.aws-logo svg {
    display: block;
    width: 32px;
    height: 9px;
}

.aws-services {
    width: 103px;
    flex: none;
    display: flex;
    align-items: center;
    gap: 8px;
    padding-left: 17px;
    box-sizing: border-box;
    font-weight: 500;
}

.aws-services svg {
    width: 16px;
    height: 16px;
}

.aws-search {
    width: 539px;
    height: 30px;
    flex: none;
    display: flex;
    align-items: center;
    box-sizing: border-box;
    border: 1px solid #7f8b94;
    border-radius: 2px;
    background: #161e2d;
    padding: 0 9px 0 11px;
    color: #d5dbdb;
    font-size: 15px;
}

.aws-search svg {
    width: 16px;
    height: 16px;
    margin-right: 11px;
}

.aws-search span {
    margin-left: auto;
    font-size: 15px;
}

.aws-right {
    margin-left: auto;
    display: flex;
    align-items: center;
    padding-right: 18px;
}

.aws-cell {
    width: 50px;
    height: 24px;
    display: flex;
    align-items: center;
    justify-content: center;
    border-right: 1px solid #414750;
    box-sizing: border-box;
    color: #fff;
}

.aws-cell svg {
    width: 16px;
    height: 18px;
}

.aws-menu {
    height: 24px;
    display: flex;
    align-items: center;
    font-size: 13px;
    gap: 5px;
    white-space: nowrap;
}

.aws-region {
    width: 107px;
    padding-left: 17px;
    box-sizing: border-box;
    border-right: 1px solid #414750;
}

.aws-user {
    padding-left: 18px;
}

.caret {
    display: inline-block;
    width: 0;
    height: 0;
    border-left: 4.500px solid transparent;
    border-right: 4.500px solid transparent;
    border-top: 9px solid currentColor;
}

.console {
    flex: 1;
    min-height: 0;
    display: flex;
}

.side {
    width: 223px;
    flex: none;
    padding-top: 17px;
    box-sizing: border-box;
    position: relative;
    overflow: hidden;
    font-size: 14px;
    color: #545b64;
}

.side a {
    display: block;
    height: 30px;
    line-height: 30px;
    padding-left: 32px;
    white-space: nowrap;
}

.side a.on {
    color: #0073bb;
    font-weight: 700;
}

.side h4 {
    height: 30px;
    line-height: 30px;
    margin: 12px 0 1px;
    padding-left: 32px;
    font-size: 14px;
    font-weight: 500;
    color: #545b64;
    position: relative;
}

.side h4::before {
    content: "";
    position: absolute;
    left: 13px;
    top: 11px;
    border-left: 5px solid transparent;
    border-right: 5px solid transparent;
    border-top: 9px solid #545b64;
}

.side-x {
    position: absolute;
    left: 187px;
    top: 25px;
    width: 13px;
    height: 14px;
    color: #545b64;
}

.side-new {
    display: block;
    width: 25px;
    height: 16px;
    margin-left: 40px;
    line-height: 15px;
    font-size: 12px;
    font-weight: 500;
    color: #0073bb;
    border-bottom: 1px dashed #0073bb;
    box-sizing: border-box;
}

.side-new + h4 {
    margin-top: 18px;
}

.vscroll {
    width: 18px;
    flex: none;
    background: #f0f0f0;
    display: flex;
    flex-direction: column;
    align-items: center;
    position: relative;
}

.vscroll .thumb {
    width: 15px;
    height: 661px;
    margin-top: 18px;
    background: #bdbdbd;
}

.arr-up, .arr-down {
    position: absolute;
    border-left: 4px solid transparent;
    border-right: 4px solid transparent;
}

.arr-up {
    top: 7px;
    border-bottom: 5px solid #a3a3a3;
}

.arr-down {
    bottom: 7px;
    border-top: 5px solid #5f6368;
}

.ec2 {
    flex: 1;
    min-width: 0;
    display: flex;
    flex-direction: column;
    border-left: 1px solid #c3c7cb;
    border-right: 1px solid #d5d8da;
}

.ec2-list {
    height: 536px;
    padding-top: 11px;
    box-sizing: border-box;
    flex: none;
    background: #fafafa;
}

.ec2-top, .ec2-filter {
    display: flex;
    align-items: center;
    justify-content: space-between;
    height: 28px;
    padding: 0 18px;
}

.ec2-filter {
    margin-top: 6px;
}

.ec2-top h1 {
    font-size: 20px;
    font-weight: 500;
    color: #16191f;
}

.ec2-top h1 span {
    font-weight: 300;
    color: #545b64;
}

.ec2-top h1 a {
    font-size: 14px;
    font-weight: 500;
    color: #0073bb;
    margin-left: 4px;
}

.ec2-buttons {
    display: flex;
    gap: 8px;
}

.btn {
    height: 28px;
    box-sizing: border-box;
    border: 1px solid #545b64;
    border-radius: 2px;
    background: #fff;
    display: flex;
    align-items: center;
    justify-content: center;
    gap: 10px;
    font-size: 14px;
    font-weight: 500;
    color: #545b64;
}

.btn-icon {
    width: 50px;
}

.btn-icon svg {
    width: 17px;
    height: 17px;
}

.btn-off {
    width: 98px;
    color: #aab7b8;
    border-color: #d5dbdb;
}

.btn-state {
    width: 156px;
}

.btn-actions {
    width: 112px;
}

.launch {
    display: flex;
    gap: 2px;
    margin-left: 1px;
    font-size: 14px;
    font-weight: 500;
    color: #16191f;
}

.launch-main {
    width: 154px;
    height: 28px;
    line-height: 28px;
    text-align: center;
    background: #ff9900;
    border-radius: 2px 0 0 2px;
}

.launch-drop {
    width: 30px;
    height: 28px;
    background: #ff9900;
    border-radius: 0 2px 2px 0;
    display: flex;
    align-items: center;
    justify-content: center;
}

.filter-box {
    width: 647px;
    height: 28px;
    box-sizing: border-box;
    border: 1px solid #545b64;
    border-radius: 2px;
    background: #fff;
    display: flex;
    align-items: center;
    padding-left: 8px;
    gap: 8px;
    font-size: 14px;
    color: #687078;
}

.filter-box svg {
    width: 15px;
    height: 15px;
}

.pager {
    display: flex;
    align-items: center;
    font-size: 14px;
    color: #16191f;
    padding-right: 5px;
}

.pager > svg {
    width: 9px;
    height: 16px;
}

.pager b {
    width: 46px;
    text-align: center;
    font-weight: 500;
}

.pager-gear {
    margin-left: 14px;
    padding-left: 12px;
    height: 28px;
    display: flex;
    align-items: center;
    border-left: 1px solid #eaeded;
    color: #545b64;
}

.pager-gear svg {
    width: 17px;
    height: 17px;
}

.row {
    display: grid;
    grid-template-columns: 52px 140px 200px 159px 151px 149px 131px 170px 200px 150px 158px;
    height: 33.45px;
    padding-top: 3px;
    box-sizing: border-box;
    align-items: center;
    background: #fff;
    border-bottom: 2px solid #eaeded;
    font-size: 14px;
    color: #16191f;
}

.row-head {
    height: 33px;
    padding-top: 0;
    margin-top: 10px;
    background: #fafafa;
    border-top: 2px solid #eaeded;
    color: #545b64;
    font-weight: 500;
}

.cell-check {
    padding-left: 19px;
}

.check {
    display: block;
    width: 14px;
    height: 14px;
    box-sizing: border-box;
    border: 1px solid #545b64;
    border-radius: 2px;
    background: #fff;
}

.th {
    height: 20px;
    display: flex;
    align-items: center;
    justify-content: space-between;
    padding: 0 12px 0 16px;
    border-right: 1px solid #7d8998;
    white-space: nowrap;
}

.th-last {
    margin-right: 8px;
}

.th-sorted {
    color: #16191f;
}

.sort-up {
    border-left: 5px solid transparent;
    border-right: 5px solid transparent;
    border-bottom: 9px solid #16191f;
}

.pen {
    width: 12px;
    height: 14px;
    vertical-align: -2px;
}

.flt {
    width: 11px;
    height: 11px;
    color: #687078;
    flex: none;
}

.td {
    display: flex;
    align-items: center;
    padding-left: 16px;
    white-space: nowrap;
}

.link {
    color: #0073bb;
}

.ok {
    color: #1d8102;
}

.muted {
    color: #687078;
}

.st {
    width: 13px;
    height: 14px;
    margin-right: 6px;
    flex: none;
}

.st-name {
    width: 67px;
}

.term .st-name {
    width: 79px;
}

.zm {
    width: 15px;
    height: 14px;
    margin-right: 9px;
    color: #545b64;
    flex: none;
    position: relative;
    top: -2px;
}

.alarm {
    color: #16191f;
}

.add {
    width: 14px;
    height: 14px;
    margin-left: 17px;
    color: #545b64;
}

.hscroll {
    height: 15px;
    margin-top: 2px;
    background: #f0f0f0;
    display: flex;
    align-items: center;
    position: relative;
    border-bottom: 1px solid #c3c7cb;
}

.hthumb {
    margin-left: 16px;
    width: 998px;
    height: 14px;
    background: #bdbdbd;
}

.arr-left, .arr-right {
    position: absolute;
    border-top: 4px solid transparent;
    border-bottom: 4px solid transparent;
}

.arr-left {
    left: 6px;
    border-right: 4px solid #a3a3a3;
}

.arr-right {
    right: 4px;
    border-left: 4px solid #5f6368;
}

.ec2-detail {
    flex: 1;
    background: #fff;
    min-height: 0;
    padding-top: 7px;
    box-sizing: border-box;
}

.detail-grip {
    width: 10px;
    height: 7px;
    margin-left: 826px;
    border-top: 2px solid #545b64;
    border-bottom: 2px solid #545b64;
    box-sizing: border-box;
}

.detail-head {
    display: flex;
    align-items: center;
    justify-content: space-between;
    padding: 0 28px 0 20px;
    margin-top: 3px;
}

.detail-head h3 {
    font-size: 18px;
    font-weight: 500;
    color: #16191f;
}

.detail-icons {
    display: flex;
    align-items: center;
    gap: 8px;
    color: #545b64;
}

.detail-icons svg {
    width: 16px;
    height: 16px;
}

.detail-icons i {
    width: 1px;
    height: 24px;
    background: #eaeded;
}

.aws-foot {
    height: 30px;
    flex: none;
    display: flex;
    align-items: center;
    background: #232f3e;
    border-top: 1px solid #3a4656;
    box-sizing: border-box;
    color: #fff;
    font-size: 12.5px;
    padding-left: 17px;
}

.aws-foot > svg {
    width: 15px;
    height: 19px;
}

.foot-shell {
    margin-left: 5px;
}

.foot-feedback {
    margin-left: 25px;
}

.foot-right {
    margin-left: auto;
    display: flex;
    gap: 26px;
    padding-right: 16px;
}

.foot-copy {
    margin-right: 4px;
}
```
